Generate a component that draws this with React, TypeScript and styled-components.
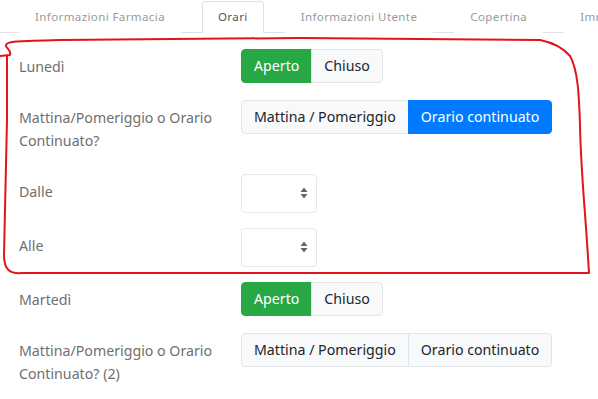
import styled, { createGlobalStyle } from "styled-components";

const GlobalStyle = createGlobalStyle`
  body {
    margin: 0;
    background: #fff;
    font-family: "Noto Sans", "Open Sans", sans-serif;
  }
`;

type Day = {
	name: string;
	open: boolean;
	continuous: boolean | null;
	suffix?: string;
	hours?: boolean;
};

const days: Day[] = [
	{ name: "Lunedì", open: true, continuous: true, hours: true },
	{ name: "Martedì", open: true, continuous: null, suffix: " (2)" },
];

const tabs = ["Informazioni Farmacia", "Orari", "Informazioni Utente", "Copertina", "Immagini"];

const Caret = () => (
	<svg width="8" height="12" viewBox="0 0 8 12">
		<path d="M4 0.5 L7.5 5 H0.5 Z" fill="#666" />
		<path d="M4 11.5 L7.5 7 H0.5 Z" fill="#666" />
	</svg>
);

const App = () => {
	return (
		<Page>
			<GlobalStyle />
			<Tabs>
				{tabs.map((t) => (
					<Tab key={t} active={t === "Orari"}>
						{t}
					</Tab>
				))}
			</Tabs>
			<Form>
				{days.map((d) => (
					<Day key={d.name}>
						<Row>
							<Label>{d.name}</Label>
							<Group>
								<Btn tone={d.open ? "green" : "light"}>Aperto</Btn>
								<Btn tone={!d.open ? "green" : "light"}>Chiuso</Btn>
							</Group>
						</Row>
						<Row>
							<Label>
								Mattina/Pomeriggio o Orario
								<br />
								Continuato?{d.suffix}
							</Label>
							<Group>
								<Btn tone={d.continuous === false ? "blue" : "light"}>Mattina / Pomeriggio</Btn>
								<Btn tone={d.continuous ? "blue" : "light"}>Orario continuato</Btn>
							</Group>
						</Row>
						{d.hours &&
							["Dalle", "Alle"].map((h) => (
								<Row key={h}>
									<Label>{h}</Label>
									<SelectBox>
										<Select defaultValue="">
											<option value=""></option>
										</Select>
										<CaretSlot>
											<Caret />
										</CaretSlot>
									</SelectBox>
								</Row>
							))}
					</Day>
				))}
			</Form>
			<Scribble viewBox="0 0 598 399" width="598" height="399">
				<path
					d="M 0 56 L 10 55 C 12 50 5 48 6 45 C 7 41 20 41 60 40 L 300 38 L 540 40 C 555 43 565 50 570 56 C 578 70 579 95 580 125 C 581 175 585 205 589 273 L 22 273 C 10 274 4 270 4 255 L 7 120 L 7 55"
					fill="none"
					stroke="#e0141a"
					strokeWidth="2"
					strokeLinejoin="round"
				/>
			</Scribble>
		</Page>
	);
};

const Page = styled.div`
  position: relative;
  width: 598px;
  height: 399px;
  overflow: hidden;
`;

const Tabs = styled.div`
  display: flex;
  gap: 21px;
  padding: 1px 0 0 19px;
  border-bottom: 1px solid #dee2e6;
  white-space: nowrap;
`;

const Tab = styled.div<{ active?: boolean }>`
  padding: 0 15px;
  height: 31px;
  line-height: 30px;
  font-size: 11.5px;
  letter-spacing: 0.4px;
  color: ${({ active }) => (active ? "#555" : "#9a9a9a")};
  border: 1px solid ${({ active }) => (active ? "#dee2e6" : "transparent")};
  border-bottom: none;
  border-radius: 4px 4px 0 0;
  background: #fff;
  margin-bottom: -1px;
  flex-shrink: 0;
`;

const Form = styled.div`
  padding: 16px 0 0 19px;
`;

const Day = styled.div``;

const Row = styled.div`
  display: grid;
  grid-template-columns: 222px auto;
  align-items: start;
  margin-bottom: 15px;
`;

const Label = styled.div`
  padding: 6px 0 7px;
  font-size: 14.2px;
  line-height: 23px;
  color: #6f6f6f;
`;

const Group = styled.div`
  display: inline-flex;
  justify-self: start;
`;

const tones = {
	green: { bg: "#28a745", border: "#28a745", color: "#fff" },
	blue: { bg: "#007bff", border: "#007bff", color: "#fff" },
	light: { bg: "#f8f9fa", border: "#e2e5e8", color: "#212529" },
};

const Btn = styled.div<{ tone: keyof typeof tones }>`
  padding: 6px 12px;
  font-size: 14.2px;
  line-height: 20px;
  background: ${({ tone }) => tones[tone].bg};
  color: ${({ tone }) => tones[tone].color};
  border: 1px solid ${({ tone }) => tones[tone].border};
  white-space: nowrap;
  &:first-child {
    border-radius: 4px 0 0 4px;
  }
  &:last-child {
    border-radius: 0 4px 4px 0;
  }
  & + & {
    margin-left: -1px;
  }
`;

const SelectBox = styled.div`
  position: relative;
  width: 76px;
  height: 39px;
`;

const Select = styled.select`
  appearance: none;
  width: 100%;
  height: 100%;
  border: 1px solid #e6e6e6;
  border-radius: 4px;
  background: #fff;
  font-family: inherit;
`;

const CaretSlot = styled.span`
  position: absolute;
  right: 9px;
  top: 13px;
  display: flex;
  pointer-events: none;
`;

const Scribble = styled.svg`
  position: absolute;
  left: 0;
  top: 0;
  pointer-events: none;
`;

export default App;
